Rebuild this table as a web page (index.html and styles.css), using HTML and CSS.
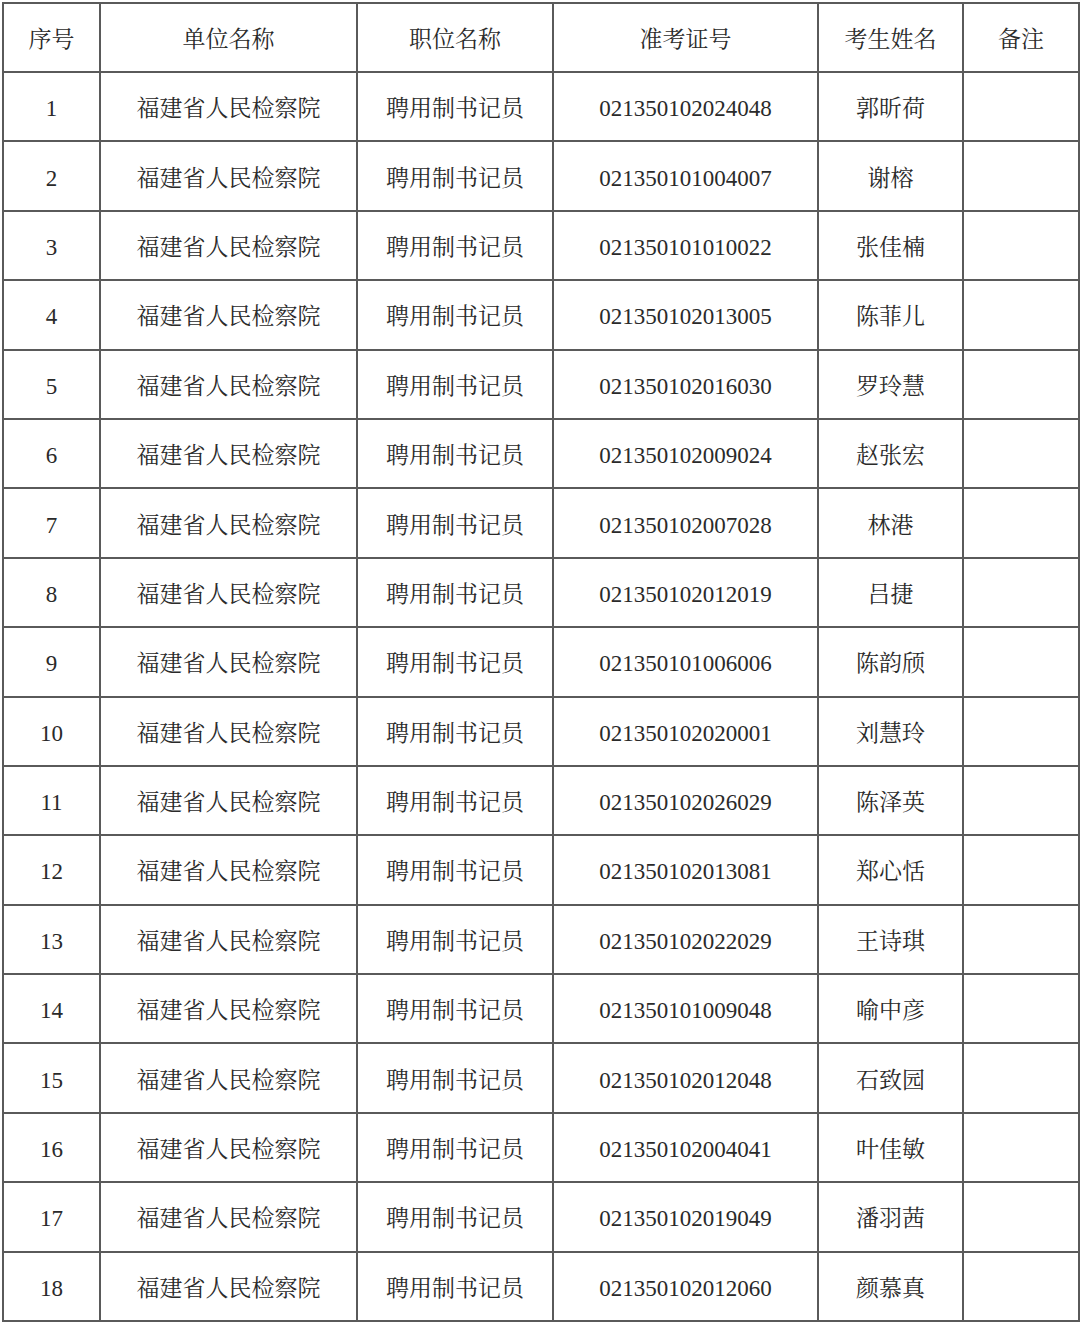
FILE: index.html
```html
<!DOCTYPE html>
<html lang="zh-CN">
<head>
<meta charset="utf-8">
<link rel="stylesheet" href="styles.css">
</head>
<body>
<table class="list">
<colgroup>
<col class="c1"><col class="c2"><col class="c3"><col class="c4"><col class="c5"><col class="c6">
</colgroup>
<thead>
<tr class="head"><th>序号</th><th>单位名称</th><th>职位名称</th><th>准考证号</th><th>考生姓名</th><th>备注</th></tr>
</thead>
<tbody>
<tr><td>1</td><td>福建省人民检察院</td><td>聘用制书记员</td><td>021350102024048</td><td>郭昕荷</td><td></td></tr>
<tr><td>2</td><td>福建省人民检察院</td><td>聘用制书记员</td><td>021350101004007</td><td>谢榕</td><td></td></tr>
<tr><td>3</td><td>福建省人民检察院</td><td>聘用制书记员</td><td>021350101010022</td><td>张佳楠</td><td></td></tr>
<tr><td>4</td><td>福建省人民检察院</td><td>聘用制书记员</td><td>021350102013005</td><td>陈菲儿</td><td></td></tr>
<tr><td>5</td><td>福建省人民检察院</td><td>聘用制书记员</td><td>021350102016030</td><td>罗玲慧</td><td></td></tr>
<tr><td>6</td><td>福建省人民检察院</td><td>聘用制书记员</td><td>021350102009024</td><td>赵张宏</td><td></td></tr>
<tr><td>7</td><td>福建省人民检察院</td><td>聘用制书记员</td><td>021350102007028</td><td>林港</td><td></td></tr>
<tr><td>8</td><td>福建省人民检察院</td><td>聘用制书记员</td><td>021350102012019</td><td>吕捷</td><td></td></tr>
<tr><td>9</td><td>福建省人民检察院</td><td>聘用制书记员</td><td>021350101006006</td><td>陈韵颀</td><td></td></tr>
<tr><td>10</td><td>福建省人民检察院</td><td>聘用制书记员</td><td>021350102020001</td><td>刘慧玲</td><td></td></tr>
<tr><td>11</td><td>福建省人民检察院</td><td>聘用制书记员</td><td>021350102026029</td><td>陈泽英</td><td></td></tr>
<tr><td>12</td><td>福建省人民检察院</td><td>聘用制书记员</td><td>021350102013081</td><td>郑心恬</td><td></td></tr>
<tr><td>13</td><td>福建省人民检察院</td><td>聘用制书记员</td><td>021350102022029</td><td>王诗琪</td><td></td></tr>
<tr><td>14</td><td>福建省人民检察院</td><td>聘用制书记员</td><td>021350101009048</td><td>喻中彦</td><td></td></tr>
<tr><td>15</td><td>福建省人民检察院</td><td>聘用制书记员</td><td>021350102012048</td><td>石致园</td><td></td></tr>
<tr><td>16</td><td>福建省人民检察院</td><td>聘用制书记员</td><td>021350102004041</td><td>叶佳敏</td><td></td></tr>
<tr><td>17</td><td>福建省人民检察院</td><td>聘用制书记员</td><td>021350102019049</td><td>潘羽茜</td><td></td></tr>
<tr><td>18</td><td>福建省人民检察院</td><td>聘用制书记员</td><td>021350102012060</td><td>颜慕真</td><td></td></tr>
</tbody>
</table>
</body>
</html>
```
FILE: styles.css
```css
html, body {
  margin: 0;
  padding: 0;
  background: #ffffff;
}
body {
  padding: 2px 0 0 2px;
  font-family: "Liberation Serif", "Noto Serif CJK SC", "Noto Sans CJK SC", serif;
  color: #2a2a2a;
}
.list {
  border-collapse: collapse;
  table-layout: fixed;
  width: 1076px;
}
.c1 { width: 97px; }
.c2 { width: 257px; }
.c3 { width: 196px; }
.c4 { width: 265px; }
.c5 { width: 145px; }
.c6 { width: 116px; }
.list th,
.list td {
  border: 2px solid #5a5a5a;
  text-align: center;
  vertical-align: middle;
  font-size: 23px;
  font-weight: normal;
  padding: 4px 0 0 0;
  line-height: 1;
}
.list tr.head { height: 69px; }
.list tbody tr { height: 69.4px; }
```
